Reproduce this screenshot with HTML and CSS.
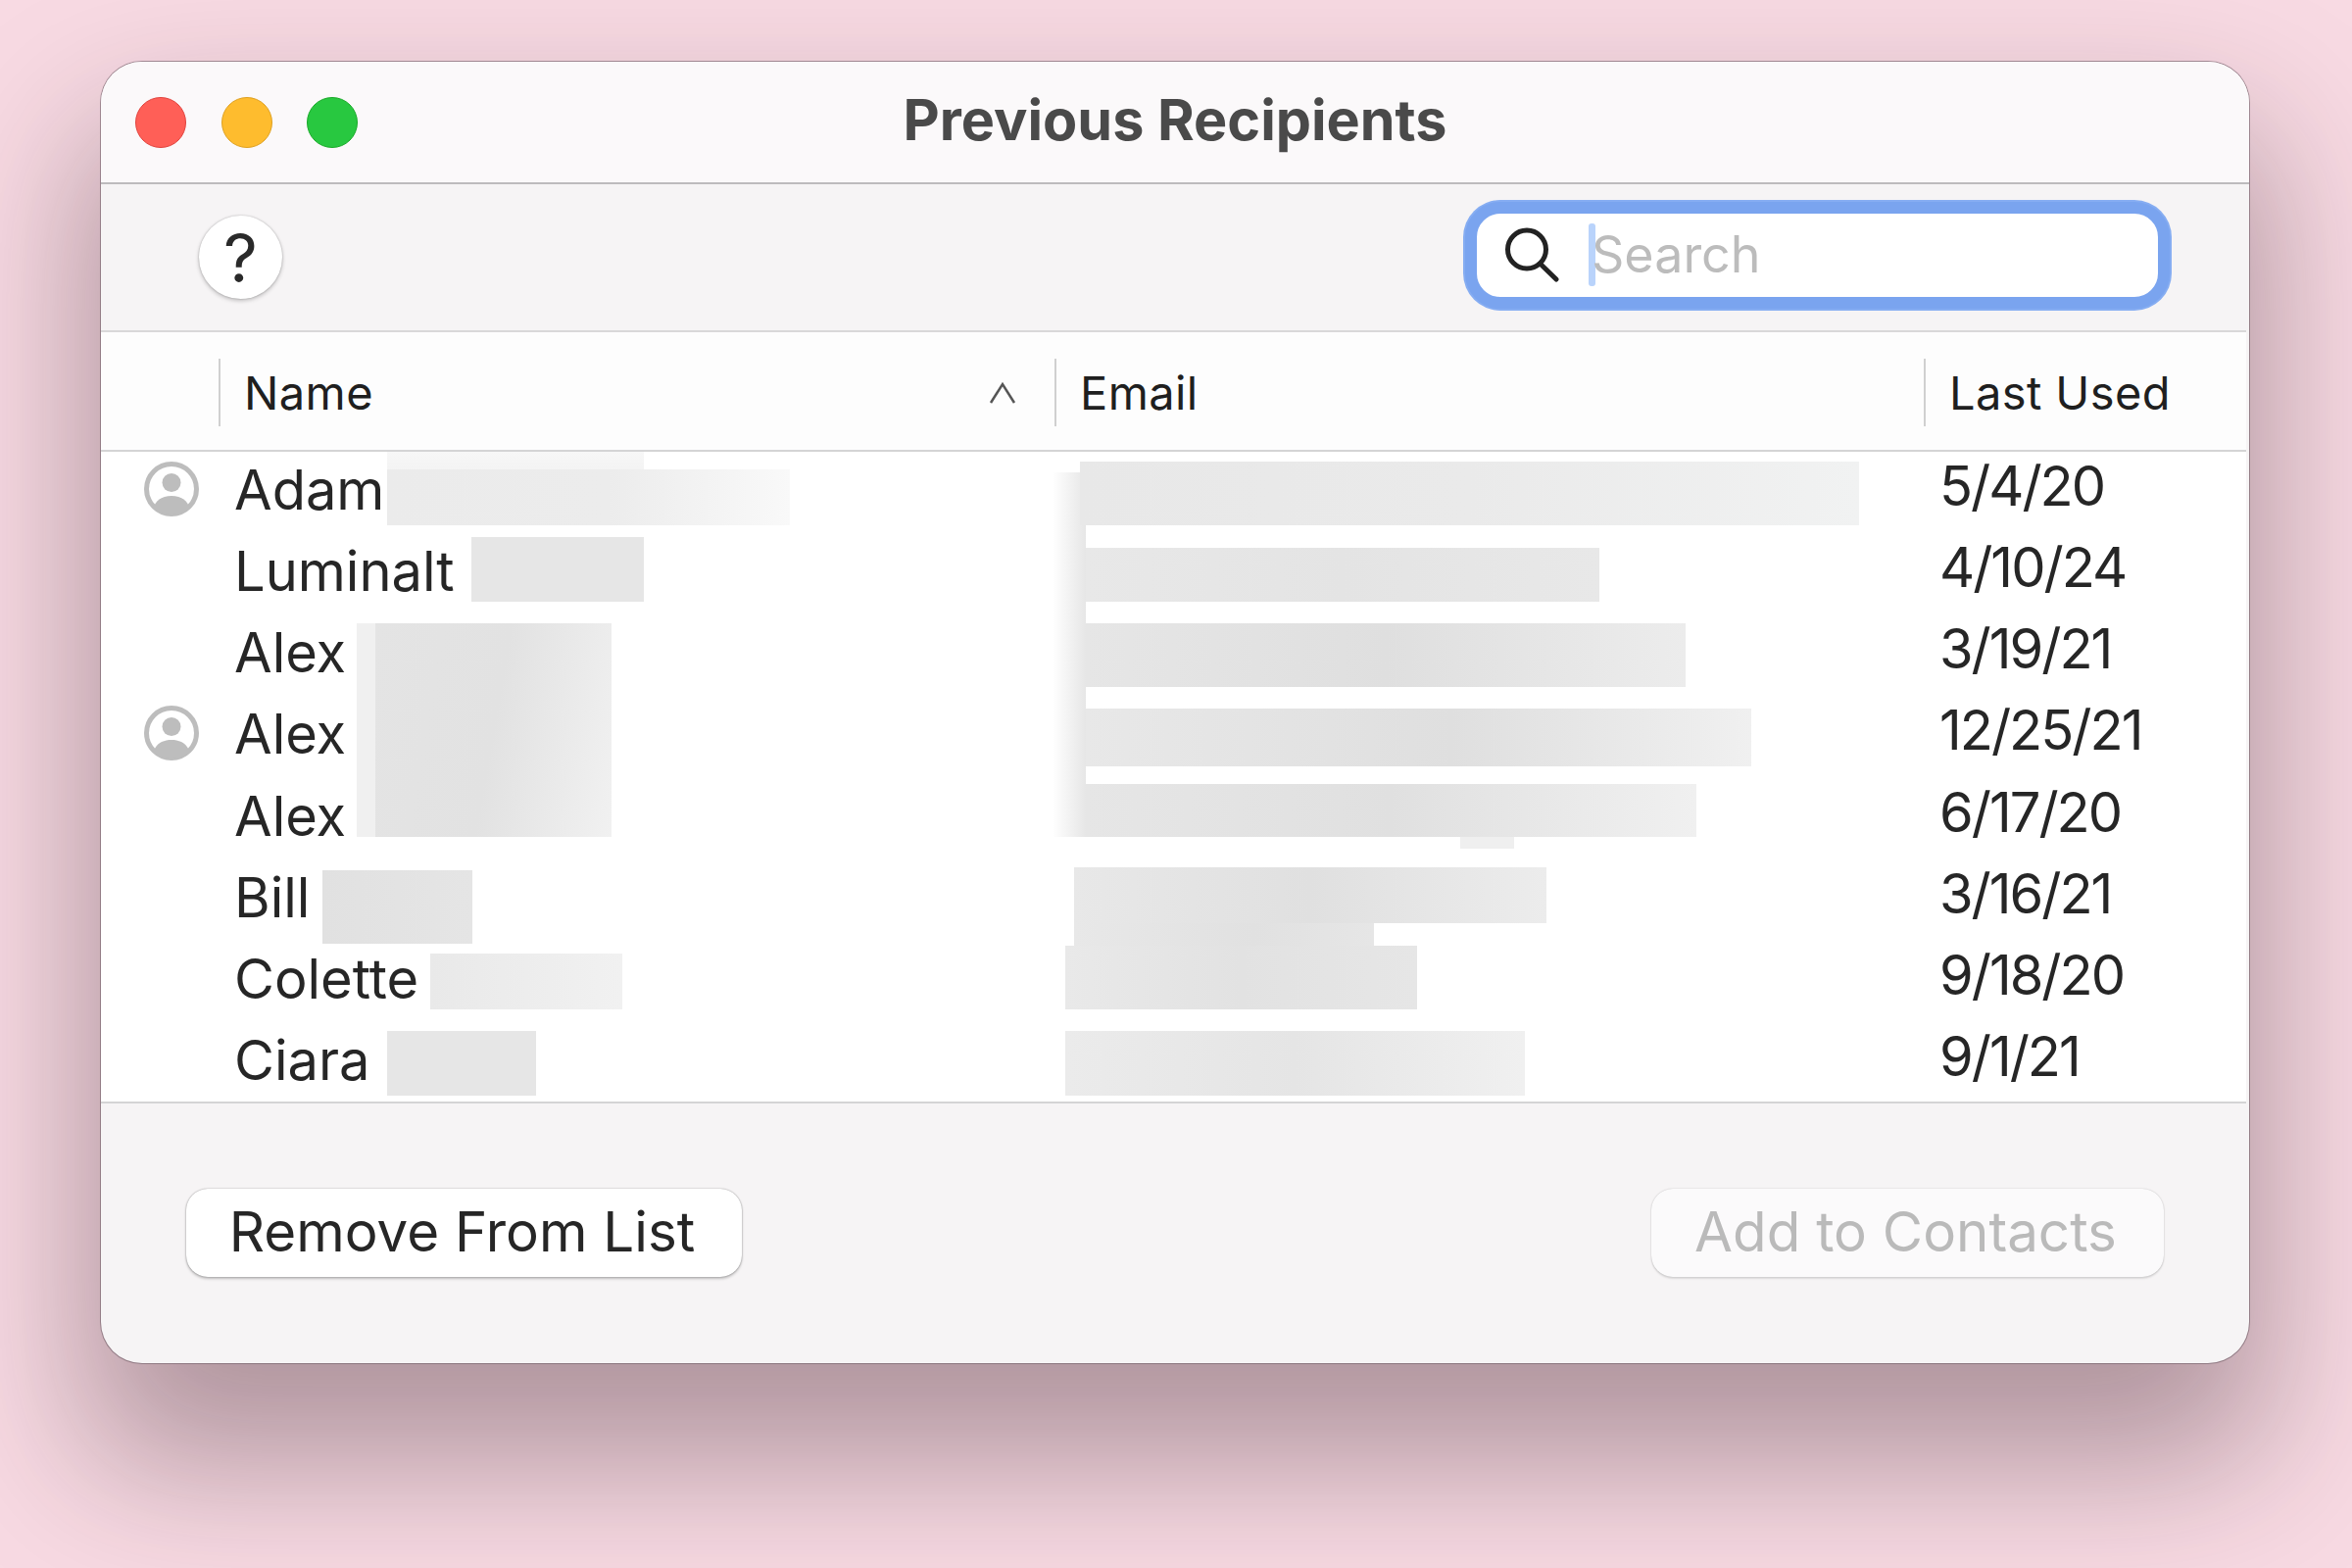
FILE: index.html
```html
<!DOCTYPE html>
<html lang="en">
<head>
<meta charset="utf-8">
<title>Previous Recipients</title>
<link rel="stylesheet" href="styles.css">
</head>
<body>
<main class="window">
  <header class="titlebar">
    <div class="lights">
      <span class="light red"></span>
      <span class="light yellow"></span>
      <span class="light green"></span>
    </div>
    <h1 class="title">Previous Recipients</h1>
  </header>
  <div class="toolbar">
    <button class="help">?</button>
    <div class="search">
      <svg class="search-icon" viewBox="0 0 56 56"><circle cx="23" cy="22.5" r="19.5"/><line x1="36.5" y1="37" x2="53" y2="53"/></svg>
      <span class="caret"></span>
      <span class="placeholder">Search</span>
    </div>
  </div>
  <div class="table-head">
    <div class="spacer"></div>
    <div class="th th-name">Name
      <svg class="sort" viewBox="0 0 30 24"><path d="M3 22 L15 3 L27 22"/></svg>
    </div>
    <div class="th">Email</div>
    <div class="th">Last Used</div>
  </div>
  <div class="list">
    <div class="row">
      <svg class="person" viewBox="0 0 56 56"><circle class="ring" cx="28" cy="28" r="25.5"/><circle class="fill" cx="28" cy="21.5" r="9.5"/><path class="fill" d="M10 46 C13 38 20 35 28 35 C36 35 43 38 46 46 A25 25 0 0 1 10 46Z"/></svg>
      <span class="name">Adam</span><span></span><span class="date">5/4/20</span>
    </div>
    <div class="row"><span></span><span class="name">Luminalt</span><span></span><span class="date">4/10/24</span></div>
    <div class="row"><span></span><span class="name">Alex</span><span></span><span class="date">3/19/21</span></div>
    <div class="row">
      <svg class="person" viewBox="0 0 56 56"><circle class="ring" cx="28" cy="28" r="25.5"/><circle class="fill" cx="28" cy="21.5" r="9.5"/><path class="fill" d="M10 46 C13 38 20 35 28 35 C36 35 43 38 46 46 A25 25 0 0 1 10 46Z"/></svg>
      <span class="name">Alex</span><span></span><span class="date">12/25/21</span>
    </div>
    <div class="row"><span></span><span class="name">Alex</span><span></span><span class="date">6/17/20</span></div>
    <div class="row"><span></span><span class="name">Bill</span><span></span><span class="date">3/16/21</span></div>
    <div class="row"><span></span><span class="name">Colette</span><span></span><span class="date">9/18/20</span></div>
    <div class="row"><span></span><span class="name">Ciara</span><span></span><span class="date">9/1/21</span></div>

    <div class="blur n1a"></div>
    <div class="blur n1b"></div>
    <div class="blur n2"></div>
    <div class="blur n3a"></div>
    <div class="blur n3b"></div>
    <div class="blur n4"></div>
    <div class="blur n5"></div>
    <div class="blur n6"></div>
    <div class="blur fade"></div>
    <div class="blur e1"></div>
    <div class="blur e2"></div>
    <div class="blur e3"></div>
    <div class="blur e4"></div>
    <div class="blur e5"></div>
    <div class="blur e5b"></div>
    <div class="blur e6"></div>
    <div class="blur e7"></div>
    <div class="blur e8"></div>
    <div class="blur e9"></div>
  </div>
  <footer class="footer">
    <button class="btn">Remove From List</button>
    <button class="btn btn-off">Add to Contacts</button>
  </footer>
</main>
</body>
</html>
```

FILE: styles.css
```css
* { box-sizing: border-box; }
html, body { margin: 0; height: 100%; }
body {
  width: 2400px;
  height: 1600px;
  overflow: hidden;
  padding: 63px 0 0 103px;
  background: #f8dae3;
  font-family: Inter, "Liberation Sans", Arial, sans-serif;
  color: #262626;
}
.window {
  width: 2192px;
  height: 1328px;
  border-radius: 42px;
  overflow: hidden;
  background: #f6f4f5;
  display: flex;
  flex-direction: column;
  box-shadow: 0 0 0 1px rgba(110, 90, 100, .6), 0 85px 150px 16px rgba(40, 20, 30, .35);
}
.titlebar {
  height: 125px;
  flex: none;
  background: #fbf9fa;
  border-bottom: 2px solid #bdbbbd;
  display: grid;
  grid-template-columns: 1fr auto 1fr;
  align-items: center;
  padding-left: 35px;
}
.lights { display: flex; gap: 35.5px; }
.light { width: 52px; height: 52px; border-radius: 50%; border: 1.5px solid; }
.red { background: #ff5f57; border-color: #e0443e; }
.yellow { background: #febc2e; border-color: #dea123; }
.green { background: #28c840; border-color: #1aab29; }
.title {
  grid-column: 2;
  margin: 0 35px 6px 0;
  font-size: 57.5px;
  font-weight: 700;
  color: #4a4a4a;
}
.toolbar {
  height: 149px;
  flex: none;
  display: flex;
  align-items: center;
  justify-content: space-between;
  padding: 0 79px 0 100px;
}
.help {
  width: 85px;
  height: 85px;
  padding: 0;
  border: 0;
  border-radius: 50%;
  background: #fff;
  font: 400 68px Inter, "Liberation Sans", sans-serif;
  color: #2a2a2a;
  box-shadow: 0 0 2px rgba(0, 0, 0, .25), 0 2px 4px rgba(0, 0, 0, .22);
}
.search {
  width: 719px;
  height: 109px;
  border: 12px solid #7aa4ef;
  border-radius: 36px;
  background: #fff;
  display: flex;
  align-items: center;
  padding-left: 28px;
  margin: 0 2px 5px 0;
  box-shadow: 0 0 0 2px #86adf2;
}
.search-icon { width: 56px; height: 56px; flex: none; fill: none; stroke: #222; stroke-width: 5; stroke-linecap: round; }
.caret { width: 7px; height: 64px; margin-left: 30px; border-radius: 3px; background: #b9d3fb; flex: none; }
.placeholder { font-size: 52px; color: #bcbcbc; margin: -2px 0 0 -4px; }
.table-head {
  height: 124px;
  flex: none;
  margin-right: 3px;
  padding-top: 27px;
  background: #fdfdfd;
  border-top: 2px solid #d9d8d9;
  border-bottom: 2px solid #d4d4d5;
  display: grid;
  grid-template-columns: 120px 853px 887px 1fr;
  align-items: start;
}
.th {
  height: 69px;
  padding-left: 24px;
  border-left: 2px solid #d0d0d0;
  font-size: 47px;
  line-height: 69px;
  letter-spacing: .4px;
  color: #1f1f1f;
  display: flex;
  align-items: center;
  justify-content: space-between;
}
.sort { width: 30px; height: 24px; margin-right: 38px; fill: none; stroke: #555; stroke-width: 2.5; }
.list {
  position: relative;
  height: 665px;
  flex: none;
  margin-right: 3px;
  background: #fff;
  overflow: hidden;
  border-bottom: 2px solid #d4d4d5;
}
.row {
  height: 83.14px;
  display: grid;
  grid-template-columns: 136px 1px 1739px 1fr;
  align-items: start;
  font-size: 56px;
  line-height: 75px;
  color: #262626;
}
.row .name { white-space: nowrap; margin-top: 2px; }
.row .date { margin-top: -2px; letter-spacing: -2px; }
.person { width: 56px; height: 56px; margin: 10px 0 0 44px; }
.ring { fill: #fff; stroke: #bdbdbd; stroke-width: 5; }
.fill { fill: #bdbdbd; }
.footer {
  flex: 1;
  display: flex;
  align-items: center;
  justify-content: space-between;
  padding: 0 87px 2px;
}
.btn {
  height: 90px;
  padding: 0 4px 2px 0;
  border: 0;
  border-radius: 22px;
  background: #fff;
  font: 400 56.5px Inter, "Liberation Sans", sans-serif;
  color: #262626;
  width: 567px;
  box-shadow: 0 0 1.5px rgba(0, 0, 0, .45), 0 2px 3px rgba(0, 0, 0, .22);
}
.btn-off {
  width: 523px;
  background: #fbfafb;
  color: #bababa;
  box-shadow: 0 0 1.5px rgba(0, 0, 0, .25), 0 2px 2px rgba(0, 0, 0, .1);
}

/* Redaction patches laid over the table rows */
.blur { position: absolute; margin-top: 1px; background: linear-gradient(90deg, #e6e6e6, #e2e2e2 50%, #efefef); }
.n1a { left: 292px; top: -1px; width: 262px; height: 40px; background: linear-gradient(180deg, #f7f7f7, #efefef); }
.n1b { left: 292px; top: 17px; width: 411px; height: 57px; background: linear-gradient(90deg, #ebebeb, #ececec 55%, #f9f9f9); }
.n2 { left: 378px; top: 86px; width: 176px; height: 66px; background: #e6e6e6; }
.n3a { left: 261px; top: 174px; width: 20px; height: 218px; background: #f0f0f0; }
.n3b { left: 280px; top: 174px; width: 241px; height: 218px; background: linear-gradient(100deg, #e4e4e4, #e2e2e2 50%, #f1f1f1); }
.n4 { left: 226px; top: 426px; width: 153px; height: 75px; background: linear-gradient(90deg, #e1e1e1, #e5e5e5); }
.n5 { left: 336px; top: 511px; width: 196px; height: 57px; background: linear-gradient(90deg, #e9e9e9, #f1f1f1); }
.n6 { left: 292px; top: 590px; width: 152px; height: 66px; background: #e6e6e6; }
.fade { left: 971px; top: 20px; width: 34px; height: 372px; background: linear-gradient(90deg, #fff, #e6e6e6); }
.e1 { left: 999px; top: 9px; width: 795px; height: 65px; background: linear-gradient(90deg, #e8e8e8, #eaeaea 50%, #f1f2f2); }
.e2 { left: 1005px; top: 97px; width: 524px; height: 55px; background: linear-gradient(90deg, #e8e8e8, #e4e4e4 50%, #e8e8e8); }
.e3 { left: 1005px; top: 174px; width: 612px; height: 65px; background: linear-gradient(90deg, #e6e6e6, #dfdfdf 50%, #ececec); }
.e4 { left: 1005px; top: 261px; width: 679px; height: 59px; background: linear-gradient(90deg, #e8e8e8, #dfdfdf 55%, #f0f0f0); }
.e5 { left: 1005px; top: 338px; width: 623px; height: 54px; background: linear-gradient(90deg, #e6e6e6, #e0e0e0 50%, #f0f0f0); }
.e5b { left: 1387px; top: 392px; width: 55px; height: 12px; background: #efefef; }
.e6 { left: 993px; top: 423px; width: 482px; height: 57px; background: linear-gradient(90deg, #e8e8e8, #e0e0e0 50%, #ececec); }
.e7 { left: 993px; top: 480px; width: 306px; height: 23px; background: linear-gradient(90deg, #e8e8e8, #e1e1e1 60%, #e6e6e6); }
.e8 { left: 984px; top: 503px; width: 359px; height: 65px; background: linear-gradient(90deg, #e9e9e9, #e2e2e2 50%, #e6e6e6); }
.e9 { left: 984px; top: 590px; width: 469px; height: 66px; background: linear-gradient(90deg, #ebebeb, #e5e5e5 50%, #f0f0f0); }
```
